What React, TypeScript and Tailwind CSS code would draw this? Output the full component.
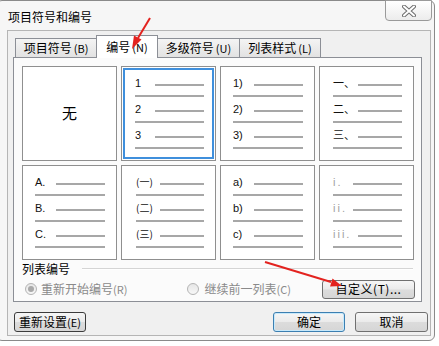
import type { ReactNode } from "react";

const CJK = "font-['Noto_Sans_CJK_SC','Liberation_Sans',sans-serif]";

type Group = { label: ReactNode; first: number };
type Cell = {
  groups: Group[];
  labelLeft: number;
  lineLeft: number;
  gray?: boolean;
  selected?: boolean;
};

function Line({ className = "" }: { className?: string }) {
  return <div className={`h-[2px] bg-[#a7a7a7] ${className}`} />;
}

function ListCell({ cell }: { cell: Cell }) {
  return (
    <div
      className={`h-[95px] w-[95px] border border-[#8f8f8f] bg-white pt-[9px] pr-[11px] ${
        cell.selected ? "shadow-[inset_0_0_0_1px_#fff,inset_0_0_0_3px_#3f8fdc]" : ""
      }`}
      style={{ paddingLeft: cell.labelLeft - 1 }}
    >
      {cell.groups.map((g, i) => (
        <div key={i} className="flex h-[26px] flex-col">
          <div className="flex h-[12px]">
            <span
              className={`shrink-0 text-[11px] leading-[12px] ${
                cell.gray ? "tracking-[2px] text-[#a0a0a0]" : "text-[#111]"
              }`}
              style={{ width: g.first - cell.labelLeft }}
            >
              {g.label}
            </span>
            <Line className="mt-[8px] flex-1" />
          </div>
          <Line className="mt-[7px]" />
        </div>
      ))}
    </div>
  );
}

const arial = "font-['Liberation_Sans',sans-serif]";

const cells: Cell[] = [
  {
    labelLeft: 14,
    lineLeft: 34,
    selected: true,
    groups: ["1", "2", "3"].map((l) => ({ label: <span className={arial}>{l}</span>, first: 34 })),
  },
  {
    labelLeft: 13,
    lineLeft: 34,
    groups: ["1)", "2)", "3)"].map((l) => ({ label: <span className={arial}>{l}</span>, first: 34 })),
  },
  {
    labelLeft: 14,
    lineLeft: 34,
    groups: ["一、", "二、", "三、"].map((l) => ({ label: <span className={CJK}>{l}</span>, first: 39 })),
  },
  {
    labelLeft: 13,
    lineLeft: 34,
    groups: ["A.", "B.", "C."].map((l) => ({ label: <span className={arial}>{l}</span>, first: 34 })),
  },
  {
    labelLeft: 15,
    lineLeft: 34,
    groups: ["(一)", "(二)", "(三)"].map((l) => ({
      label: <span className={`${CJK} text-[10px]`}>{l}</span>,
      first: 39,
    })),
  },
  {
    labelLeft: 13,
    lineLeft: 34,
    groups: ["a)", "b)", "c)"].map((l) => ({ label: <span className={arial}>{l}</span>, first: 34 })),
  },
  {
    labelLeft: 14,
    lineLeft: 34,
    gray: true,
    groups: [
      { label: <span className={arial}>i.</span>, first: 34 },
      { label: <span className={arial}>ii.</span>, first: 34 },
      { label: <span className={arial}>iii.</span>, first: 39 },
    ],
  },
];

function Tab({ label, hot, selected, w }: { label: string; hot: string; selected?: boolean; w: string }) {
  return (
    <div
      className={`flex items-center justify-center border border-b-0 border-[#8c8f96] ${w} ${
        selected
          ? "z-10 mb-[-1px] h-[23px] bg-white"
          : "h-[19px] bg-[linear-gradient(#f4f4f4,#e2e2e2)]"
      } text-[12px] leading-none text-black`}
    >
      {label}
      <span className="ml-[2px] text-[11px]">({hot})</span>
    </div>
  );
}

function Button({ children, className = "" }: { children: ReactNode; className?: string }) {
  return (
    <div
      className={`flex items-center justify-center rounded-[3px] border text-[12px] leading-none text-black bg-[linear-gradient(#f6f6f6_0%,#ebebeb_48%,#dcdcdc_52%,#d6d6d6_100%)] ${className}`}
    >
      {children}
    </div>
  );
}

function Radio({ checked }: { checked?: boolean }) {
  return (
    <div className="flex h-[12px] w-[12px] items-center justify-center rounded-full border border-[#b4b4b4] bg-[linear-gradient(#e6e6e6,#f7f7f7)]">
      {checked && <div className="h-[6px] w-[6px] rounded-full bg-[#a9a9a9]" />}
    </div>
  );
}

export default function App() {
  return (
    <div className={`relative h-[346px] w-[439px] overflow-hidden bg-white ${CJK}`}>
      <div className="ml-[-4px] flex h-[341px] w-[439px] flex-col rounded-[6px] border border-[#8a8a8a] bg-[#f6f6f6]">
        {/* title bar */}
        <div className="flex h-[29px] items-start justify-between">
          <div className="ml-[11px] mt-[9px] text-[12px] leading-[14px] text-black">项目符号和编号</div>
          <div className="mr-[2px] mt-[-1px] flex h-[21px] w-[47px] items-center justify-center rounded-b-[4px] border border-[#9a9a9a] bg-[linear-gradient(#ffffff,#ececec)]">
            <svg width="14" height="12" viewBox="0 0 14 12">
              <path d="M2 1.5 L12 10.5 M12 1.5 L2 10.5" stroke="#6d6d6d" strokeWidth="4" strokeLinecap="round" />
              <path d="M2 1.5 L12 10.5 M12 1.5 L2 10.5" stroke="#ffffff" strokeWidth="2" strokeLinecap="round" />
            </svg>
          </div>
        </div>

        {/* client area */}
        <div className="mb-[4px] ml-[10px] mr-[3px] flex flex-1 flex-col border border-[#b5b5b5] bg-[#f0f0f0]">
          <div className="mt-[4px] flex items-end pl-[7px]">
            <Tab label="项目符号" hot="B" w="w-[82px]" />
            <Tab label="编号" hot="N" selected w="w-[62px] -ml-px" />
            <Tab label="多级符号" hot="U" w="w-[83px] -ml-px" />
            <Tab label="列表样式" hot="L" w="w-[82px] -ml-px" />
          </div>

          <div className="ml-[5px] flex h-[245px] w-[409px] flex-col border border-[#8c8f96] bg-[#fbfbfb]">
            <div className="ml-[8px] mt-[8px] grid w-[392px] grid-cols-4 gap-[4px]">
              <div className="flex h-[95px] w-[95px] items-center justify-center border border-[#8f8f8f] bg-white text-[15px] text-black">
                无
              </div>
              {cells.map((c, i) => (
                <ListCell key={i} cell={c} />
              ))}
            </div>

            <div className="ml-[8px] mt-[2px] flex items-center">
              <span className="text-[12px] leading-[14px] text-black">列表编号</span>
              <div className="ml-[12px] mr-[8px] h-[2px] flex-1 border-t border-b border-t-[#d5d5d5] border-b-white" />
            </div>

            <div className="mt-[3px] flex h-[20px] items-center text-[12px] leading-none text-[#8a8a8a]">
              <div className="ml-[11px]">
                <Radio checked />
              </div>
              <span className="ml-[4px]">
                重新开始编号<span className="text-[11px]">(R)</span>
              </span>
              <div className="ml-[60px]">
                <Radio />
              </div>
              <span className="ml-[5px]">
                继续前一列表<span className="text-[11px]">(C)</span>
              </span>
              <Button className="ml-auto mr-[6px] h-[19px] w-[93px] border-[#707070] tracking-[0.5px]">
                自定义(T)...
              </Button>
            </div>
          </div>

          <div className="mt-[10px] flex items-center pl-[6px] pr-[2px]">
            <Button className="h-[20px] w-[72px] border-[#3c3c3c]">
              重新设置<span className="text-[11px]">(E)</span>
            </Button>
            <Button className="ml-auto h-[20px] w-[72px] border-[#3c7fb1] shadow-[inset_0_0_0_1px_#c7e9fb]">确定</Button>
            <Button className="ml-[10px] h-[20px] w-[73px] border-[#707070]">取消</Button>
          </div>
        </div>
      </div>

      {/* annotation arrows */}
      <svg className="pointer-events-none absolute left-0 top-0 z-20" width="439" height="346" viewBox="0 0 439 346">
        <line x1="150" y1="18" x2="138" y2="38" stroke="#e3231f" strokeWidth="2" />
        <polygon points="132,49 141.5,39.5 134,35.5" fill="#e3231f" />
        <line x1="265" y1="262" x2="331" y2="282" stroke="#e3231f" strokeWidth="2" />
        <polygon points="342,286 330,286.5 332.5,278.5" fill="#e3231f" />
      </svg>
    </div>
  );
}
